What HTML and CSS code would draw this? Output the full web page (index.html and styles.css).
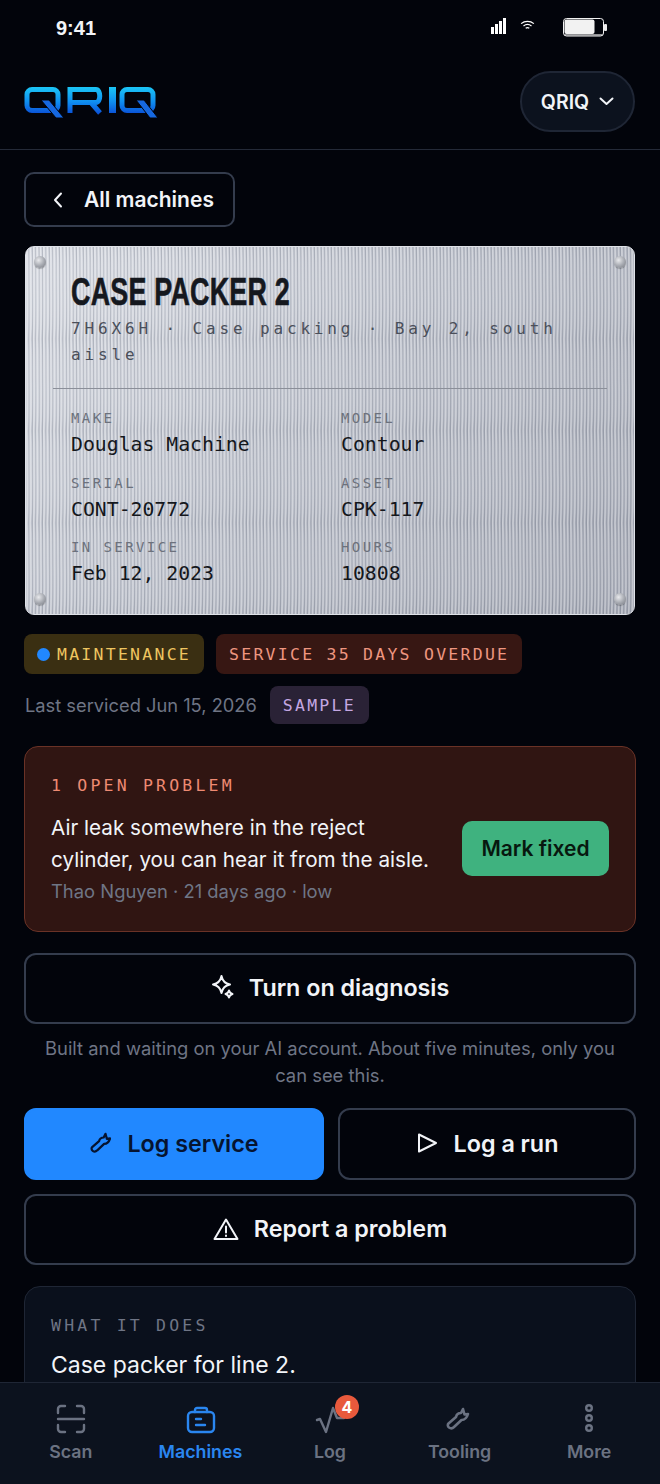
FILE: index.html
```html
<!DOCTYPE html>
<html lang="en">
<head>
<meta charset="utf-8">
<title>QRIQ</title>
<link rel="stylesheet" href="styles.css">
</head>
<body>
<div class="app">
  <div class="status">
    <span class="time">9:41</span>
    <div class="status-icons">
      <svg class="sig" width="15" height="16" viewBox="0 0 15 16"><path d="M0 9h3v7H0zM4 6h3v10H4zM8 3h3v13H8zM12 0h3v16h-3z" fill="#fff"/></svg>
      <svg class="wifi" width="15" height="10" viewBox="0 0 16 11" fill="none" stroke="#fff" stroke-width="1.4"><path d="M1 4c4-3.400 10-3.400 14 0M3.600 6.600c2.600-2 6.200-2 8.800 0"/><path d="M6 9c1.200-.8 2.800-.8 4 0"/></svg>
      <svg class="batt" width="45" height="19" viewBox="0 0 45 19"><rect x=".5" y=".5" width="40" height="17.500" rx="3" fill="#02040b" stroke="#f2f2f2"/><rect x="1.500" y="1.500" width="30" height="14.500" rx="2" fill="#f2f2f2"/><rect x="1.500" y="16.400" width="38" height="1" fill="#f2f2f2"/><rect x="41" y="6" width="3" height="7" rx="1" fill="#eee"/></svg>
    </div>
  </div>
  <header class="topbar">
    <svg class="logo" width="134" height="31" viewBox="0 0 134 31" fill="none" role="img" aria-label="QRIQ">
      <defs>
        <linearGradient id="lg" gradientUnits="userSpaceOnUse" x1="0" y1="0" x2="0" y2="27"><stop offset="0" stop-color="#1bc6f6"/><stop offset=".55" stop-color="#0f8ef0"/><stop offset="1" stop-color="#0a4fd6"/></linearGradient>
      </defs>
      <g stroke="url(#lg)" stroke-width="5">
        <rect x="3" y="2.500" width="31" height="21" rx="5"/>
        <path d="M46 26V2.500h26c5 0 5 13 0 13H48M67 15.500l9 10.500"/>
        <rect x="98" y="2.500" width="31" height="21" rx="5"/>
      </g>
      <rect x="85" y="0" width="7" height="26" fill="url(#lg)"/>
      <path d="M17 13h8l15 18h-8zM112 13h8l14 18h-8z" fill="#1668e0" stroke="#02040b" stroke-width="1"/>
    </svg>
    <button class="org">QRIQ<svg width="15" height="9" viewBox="0 0 15 9" fill="none" stroke="#f2f4f8" stroke-width="2" stroke-linecap="round" stroke-linejoin="round"><path d="M1.500 1.500 7.500 7l6-5.500"/></svg></button>
  </header>
  <main class="content">
    <a class="back"><svg width="10" height="16" viewBox="0 0 10 16" fill="none" stroke="#f2f4f8" stroke-width="2" stroke-linecap="round" stroke-linejoin="round"><path d="M8 1.500 2 8l6 6.500"/></svg>All machines</a>

    <section class="plate">
      <svg class="tex" width="100%" height="100%" aria-hidden="true">
        <defs>
          <pattern id="ribs" width="3.400" height="92" patternUnits="userSpaceOnUse">
            <path d="M0 0h1.500c.5 12 .5 34 .7 46 .2 12 .2 34-.7 46H0c.9-12 .9-34 .7-46C.5 34 .5 12 0 0z" fill="#fff" fill-opacity=".34"/>
            <path d="M2.200 0h1.200v92H2.200c.6-12 .6-34 .6-46C2.800 34 2.800 12 2.200 0z" fill="#3e4558" fill-opacity=".24"/>
          </pattern>
        </defs>
        <rect width="100%" height="100%" fill="url(#ribs)"/>
      </svg>
      <i class="rivet tl"></i><i class="rivet tr"></i><i class="rivet bl"></i><i class="rivet br"></i>
      <h1 class="plate-title">CASE PACKER 2</h1>
      <p class="plate-sub">7H6X6H · Case packing · Bay 2, south aisle</p>
      <div class="plate-grid">
        <div><span class="k">MAKE</span><span class="v">Douglas Machine</span></div>
        <div><span class="k">MODEL</span><span class="v">Contour</span></div>
        <div><span class="k">SERIAL</span><span class="v">CONT-20772</span></div>
        <div><span class="k">ASSET</span><span class="v">CPK-117</span></div>
        <div><span class="k">IN SERVICE</span><span class="v">Feb 12, 2023</span></div>
        <div><span class="k">HOURS</span><span class="v">10808</span></div>
      </div>
    </section>

    <div class="chips">
      <span class="chip amber"><i class="dot"></i>MAINTENANCE</span>
      <span class="chip red">SERVICE 35 DAYS OVERDUE</span>
    </div>
    <div class="meta">
      <span>Last serviced Jun 15, 2026</span>
      <span class="chip purple">SAMPLE</span>
    </div>

    <section class="problem">
      <div class="problem-text">
        <h2 class="eyebrow red-t">1 OPEN PROBLEM</h2>
        <p class="problem-body">Air leak somewhere in the reject cylinder, you can hear it from the aisle.</p>
        <p class="problem-meta">Thao Nguyen · 21 days ago · low</p>
      </div>
      <button class="fix">Mark fixed</button>
    </section>

    <button class="btn wide diag">
      <svg width="24" height="24" viewBox="0 0 24 24" fill="none" stroke="#f2f4f8" stroke-width="2" stroke-linejoin="round"><path d="M10.500 1C11.500 6 13.500 8.500 19 9.500 13.500 10.500 11.500 13 10.500 18 9.500 13 7.500 10.500 2 9.500 7.500 8.500 9.500 6 10.500 1z"/><path d="M18 15.500C18.500 17.500 19.500 18.500 21.500 19 19.500 19.500 18.500 20.500 18 22.500 17.500 20.500 16.500 19.500 14.500 19 16.500 18.500 17.500 17.500 18 15.500z"/></svg>
      Turn on diagnosis
    </button>
    <p class="hint">Built and waiting on your AI account. About five minutes, only you can see this.</p>

    <div class="two">
      <button class="btn primary">
        <svg width="22" height="22" viewBox="0 0 24 24" fill="none" stroke="#061430" stroke-width="2.400" stroke-linecap="round" stroke-linejoin="round"><path d="M3.500 16.500 11 10c.5-2.500 2.500-4 5-4l2-4 1.500 5.500L23 7c-1 3.500-3 6-6.500 6L9 20c-1.500 1.500-3.500 1.500-5 .5S2.500 17.500 3.500 16.500z"/></svg>
        Log service
      </button>
      <button class="btn">
        <svg width="22" height="22" viewBox="0 0 22 22" fill="none" stroke="#f2f4f8" stroke-width="2" stroke-linejoin="round"><path d="M3 2.500 20 11 3 19.500z"/></svg>
        Log a run
      </button>
    </div>
    <button class="btn wide report">
      <svg width="26" height="24" viewBox="0 0 26 24" fill="none" stroke="#f2f4f8" stroke-width="2" stroke-linejoin="round" stroke-linecap="round"><path d="M13 2.500 24.500 22h-23z"/><path d="M13 9.500v6M13 18.500v.5"/></svg>
      Report a problem
    </button>

    <section class="about">
      <h2 class="eyebrow muted-t">WHAT IT DOES</h2>
      <p class="about-body">Case packer for line 2.</p>
    </section>
  </main>
  <nav class="tabs">
    <a class="tab">
      <svg width="32" height="32" viewBox="0 0 32 32" fill="none" stroke="currentColor" stroke-width="2.400" stroke-linecap="round"><path d="M3 10V6a3 3 0 0 1 3-3h4M22 3h4a3 3 0 0 1 3 3v4M3 22v4a3 3 0 0 0 3 3h4M22 29h4a3 3 0 0 0 3-3v-4M3 16h26"/></svg>
      Scan
    </a>
    <a class="tab active">
      <svg width="32" height="32" viewBox="0 0 32 32" fill="none" stroke="currentColor" stroke-width="2.400" stroke-linecap="round" stroke-linejoin="round"><rect x="4" y="9" width="26" height="20" rx="4"/><path d="M11 9V7a2 2 0 0 1 2-2h8a2 2 0 0 1 2 2v2M12 16h5M12 22h9"/></svg>
      Machines
    </a>
    <a class="tab">
      <span class="log-ic">
        <svg width="32" height="32" viewBox="0 0 32 32" fill="none" stroke="currentColor" stroke-width="2.400" stroke-linecap="round" stroke-linejoin="round"><path d="M3 17l3-1 6 13 7-24 4 10h7"/></svg>
        <b class="badge">4</b>
      </span>
      Log
    </a>
    <a class="tab">
      <svg width="32" height="32" viewBox="0 0 32 32" fill="none" stroke="currentColor" stroke-width="2.600" stroke-linecap="round" stroke-linejoin="round"><path d="M4.500 20.500 12 14c.5-2.500 2.500-4 5-4l2-4 1.500 5.500L24 11c-1 3.500-3 6-6.500 6L10 24c-1.500 1.500-3.500 1.500-5 .5s-1.500-3-.5-4z"/></svg>
      Tooling
    </a>
    <a class="tab">
      <svg width="32" height="32" viewBox="0 0 32 32" fill="none" stroke="currentColor" stroke-width="2.400"><circle cx="16" cy="5" r="2.800"/><circle cx="16" cy="15" r="2.800"/><circle cx="16" cy="25" r="2.800"/></svg>
      More
    </a>
  </nav>
</div>
</body>
</html>
```
FILE: styles.css
```css
* { box-sizing: border-box; }
html, body { margin: 0; height: 100%; background: #02040b; }
body { font-family: Inter, "Liberation Sans", sans-serif; color: #f2f4f8; overflow: hidden; }
.app { width: 660px; height: 1484px; display: flex; flex-direction: column; overflow: hidden; }
button { font: inherit; color: inherit; background: none; border: 0; }

.status { height: 50px; flex: none; display: flex; align-items: flex-start; justify-content: space-between; padding: 16px 52px 0 56px; }
.time { font-size: 20px; line-height: 24px; font-weight: 700; font-family: "Liberation Sans", sans-serif; }
.status-icons { display: flex; align-items: flex-start; }
.sig { margin: 2px 14px 0 0; }
.wifi { margin: 4px 28px 0 0; }
.batt { margin-top: 2px; }

.topbar { height: 100px; flex: none; border-bottom: 1px solid #242a38; display: flex; align-items: flex-start; justify-content: space-between; padding: 21px 25px 0 24px; }
.logo { margin-top: 16px; }
.org { width: 115px; height: 61px; border-radius: 31px; background: #0c121e; border: 2px solid #1f2635; display: flex; align-items: center; justify-content: center; gap: 10px; font-size: 19.500px; font-weight: 600; padding: 0; }

.content { flex: 1; min-height: 0; overflow: hidden; padding: 22px 24px 0; display: flex; flex-direction: column; }
.back { flex: none; align-self: flex-start; width: 211px; height: 55px; border: 2px solid #343c4d; border-radius: 10px; display: flex; align-items: center; gap: 21px; padding-left: 27px; font-size: 21px; font-weight: 600; }

.plate { flex: none; position: relative; margin: 19px 1px 0; height: 369px; border-radius: 9px; padding: 25px 27px 0; color: #15181e; overflow: hidden;
  border: 1px solid #dfe2e8;
  background: linear-gradient(135deg, #dadde4 0%, #bfc3cd 45%, #a6aab6 100%); }
.tex { position: absolute; inset: 0; }
.rivet { position: absolute; width: 12px; height: 12px; border-radius: 50%; background: radial-gradient(circle at 38% 35%, #e8e9ec 0%, #a9acb3 50%, #74777f 100%); box-shadow: 0 1px 1px rgba(0,0,0,.25); }
.tl { top: 9px; left: 8px; } .tr { top: 9px; right: 8px; } .bl { bottom: 9px; left: 8px; } .br { bottom: 9px; right: 8px; }
.plate-title { position: relative; margin: 0 0 0 18px; font-family: "Liberation Sans", sans-serif; font-size: 38px; line-height: 40px; font-weight: 700; letter-spacing: .3px; white-space: nowrap; transform: scaleX(.708); transform-origin: left center; -webkit-text-stroke: .6px #15181e; }
.plate-sub { position: relative; margin: 4px 0 0 18px; font-family: "DejaVu Sans Mono", monospace; font-size: 16px; line-height: 26px; letter-spacing: 3.860px; color: #4a4f5a; }
.plate-grid { position: relative; margin-top: 20px; border-top: 1px solid #8b8f99; padding: 20px 0 0 18px; display: grid; grid-template-columns: 270px 1fr; row-gap: 12.500px; }
.plate-grid div { display: flex; flex-direction: column; height: 52px; }
.k { font-family: "DejaVu Sans Mono", monospace; font-size: 14px; line-height: 19px; letter-spacing: 2.400px; color: #6c717c; }
.v { margin-top: 2px; font-family: "DejaVu Sans Mono", monospace; font-size: 19.800px; line-height: 29px; color: #14171c; }

.chips { display: flex; gap: 12px; margin-top: 19px; }
.chip { display: inline-flex; align-items: center; height: 40px; padding: 0 13px; border-radius: 8px; font-family: "DejaVu Sans Mono", monospace; font-size: 16.500px; letter-spacing: 2.250px; white-space: nowrap; }
.amber { background: #3a2f12; color: #eec560; gap: 7px; }
.dot { width: 13px; height: 13px; border-radius: 50%; background: #2188ff; }
.red { background: #371713; color: #ee9680; }
.meta { display: flex; align-items: center; gap: 13px; margin-top: 12px; padding-left: 1px; font-size: 18.300px; color: #6f7585; }
.purple { background: #2a2236; color: #c4a7e2; height: 38px; }

.problem { flex: none; margin-top: 22px; height: 186px; border: 1px solid #6a3226; border-radius: 14px; background: #301512; padding: 26px 25px 0 26px; display: flex; gap: 16px; align-items: flex-start; }
.problem-text { width: 395px; flex: none; }
.eyebrow { margin: 0; font-family: "DejaVu Sans Mono", monospace; font-weight: 400; font-size: 16.500px; line-height: 26px; letter-spacing: 3.200px; }
.red-t { color: #ee8a72; }
.muted-t { color: #6f7585; }
.problem-body { margin: 13px 0 0; font-size: 20.700px; line-height: 32px; }
.problem-meta { margin: 0; font-size: 18.400px; line-height: 30px; color: #6f7585; }
.fix { margin-top: 48px; flex: none; width: 147px; height: 55px; border-radius: 10px; background: #3fb27f; color: #07180f; font-size: 21px; font-weight: 600; padding: 0; }

.btn { display: flex; align-items: center; justify-content: center; gap: 14px; flex: 1; height: 71px; border: 2px solid #343c4d; border-radius: 12px; font-size: 23.300px; font-weight: 600; padding: 0 0 2px; }
.wide { flex: none; width: 100%; }
.diag { margin-top: 21px; padding-bottom: 3px; }
.hint { flex: none; margin: 11px 0 0; padding: 0 20px; font-size: 18.400px; line-height: 27px; color: #6f7585; text-align: center; }
.two { flex: none; display: flex; gap: 14px; margin-top: 19px; }
.two .btn { height: 72px; gap: 16px; }
.two .primary { flex: 0 0 300px; }
.primary { background: #2188ff; border-color: #2188ff; color: #061430; }
.report { margin-top: 14px; gap: 15px; }
.about { flex: none; margin-top: 21px; height: 200px; border: 1px solid #1f2635; border-radius: 16px; background: #0a101c; padding: 26px; }
.about-body { margin: 10px 0 0; font-size: 23px; line-height: 32px; }

.tabs { height: 102px; flex: none; background: #0c121e; border-top: 1px solid #1f2635; display: flex; padding: 20px 6px 0; }
.tab { flex: 1; display: flex; flex-direction: column; align-items: center; color: #6b7282; font-size: 17.800px; font-weight: 600; line-height: 24px; gap: 5px; }
.tab svg { display: block; }
.active { color: #2a86f0; }
.log-ic { position: relative; display: block; }
.badge { position: absolute; top: -8px; left: 21px; width: 24px; height: 24px; border-radius: 50%; background: #e8593c; color: #fff; font-size: 16px; font-weight: 700; line-height: 24px; text-align: center; }
```
